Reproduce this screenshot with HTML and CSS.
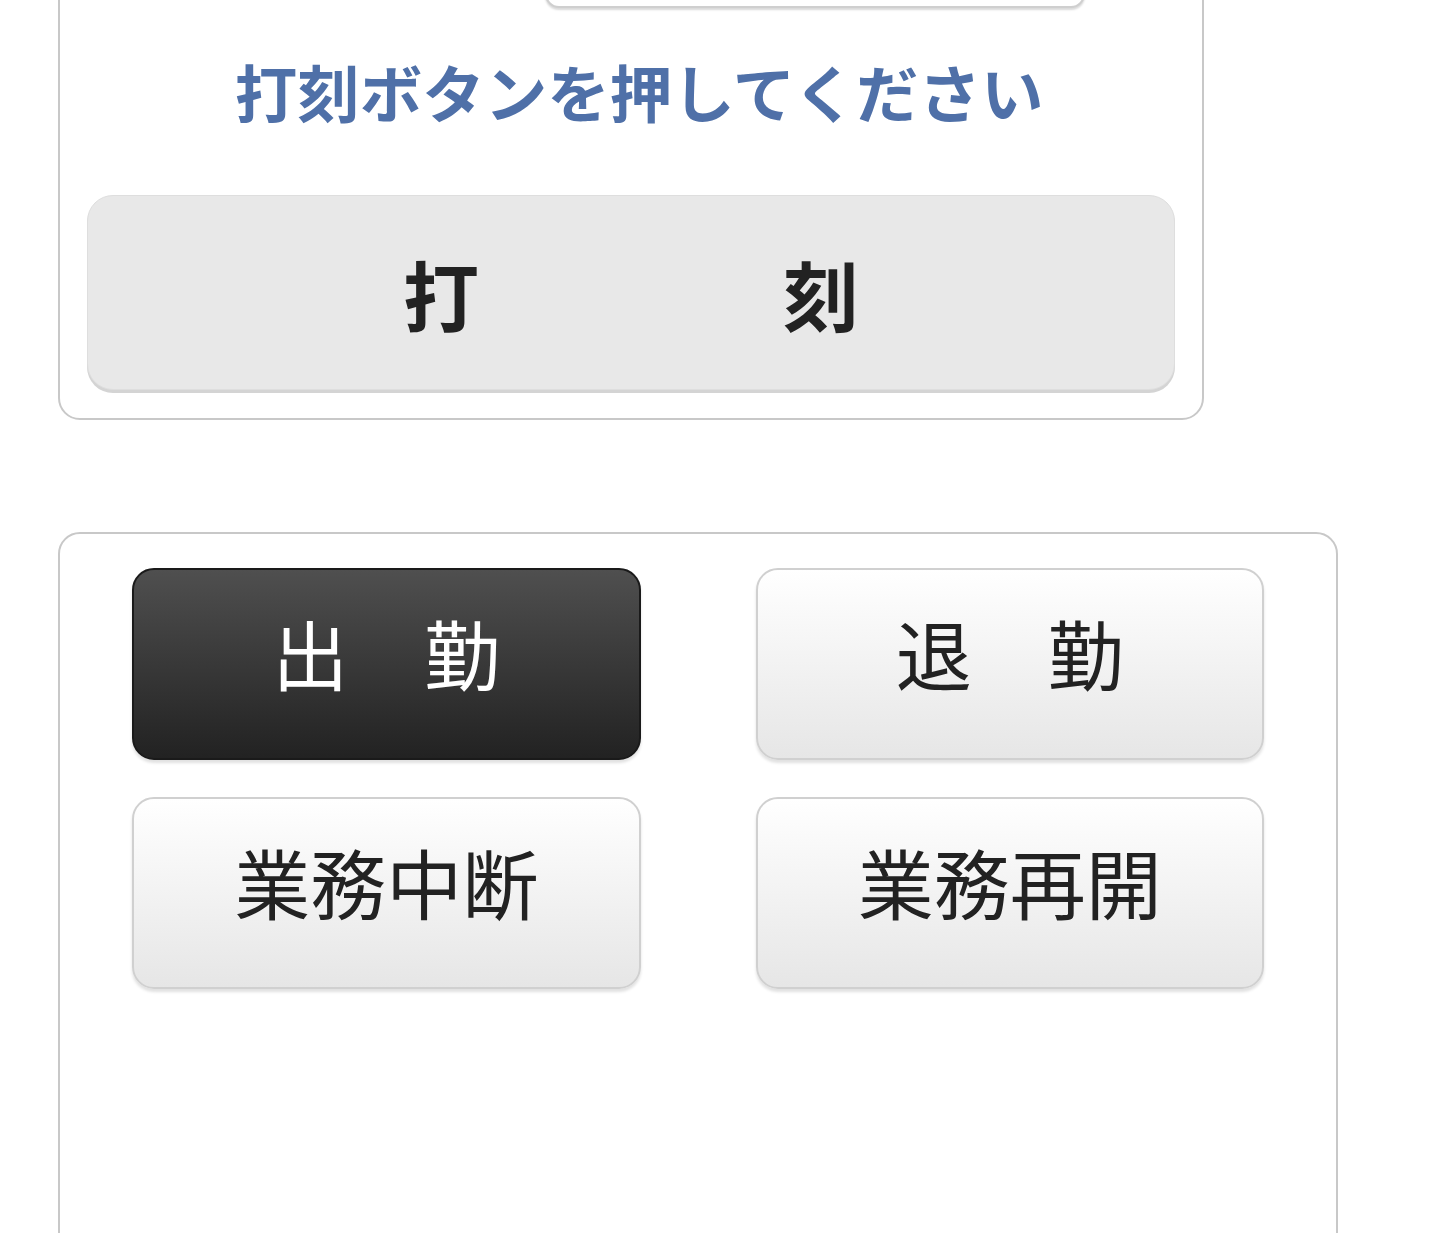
FILE: index.html
```html
<!DOCTYPE html>
<html lang="ja">
<head>
  <meta charset="UTF-8" />
  <meta name="viewport" content="width=device-width, initial-scale=1.0"/>
  <title>打刻</title>
  <link rel="stylesheet" href="styles.css">
</head>
<body>

<div class="page">

  <!-- 打刻カード -->
  <section class="card punch-card">
    <input type="text" class="time-box" readonly />
    <p class="message">打刻ボタンを押してください</p>
    <button class="punch-btn">打　　　　刻</button>
  </section>

  <!-- 勤務区分 -->
  <section class="card kind-card">
    <div class="kind-grid">
      <button class="kind-btn active">出　勤</button>
      <button class="kind-btn">退　勤</button>
      <button class="kind-btn">業務中断</button>
      <button class="kind-btn">業務再開</button>
    </div>
  </section>

</div>

</body>
</html>
```

FILE: styles.css
```css
body {
  margin: 0;
  padding: 0;
  background: #fff;
  font-family: "Noto Sans CJK JP", "Noto Sans", sans-serif;
  color: #222;
}

.page {
  margin-top: -74px;
  padding-left: 58px;
}

.card {
  box-sizing: border-box;
  background: #fff;
  border: 2px solid #c8c8c8;
  border-radius: 22px;
}

/* 打刻カード */
.punch-card {
  width: 1146px;
  padding: 20px 27px 28px;
}

.time-box {
  display: block;
  box-sizing: border-box;
  width: 540px;
  height: 60px;
  margin-left: 458px;
  border: 2px solid #cfcfcf;
  border-radius: 14px;
  box-shadow: 0 2px 2px rgba(0,0,0,0.15);
  background: #fff;
}

.message {
  margin: 46px 0 0;
  padding-left: 16px;
  text-align: center;
  font-size: 62.5px;
  line-height: 74px;
  font-weight: bold;
  color: #4f70a8;
}

.punch-btn {
  display: block;
  box-sizing: border-box;
  width: 100%;
  height: 195px;
  margin-top: 67px;
  background: #e8e8e8;
  border: 1px solid #dedede;
  border-radius: 26px;
  box-shadow: 0 3px 0 #d4d4d4;
  font-family: inherit;
  font-size: 76px;
  font-weight: bold;
  color: #222;
}

/* 勤務区分 */
.kind-card {
  width: 1280px;
  min-height: 800px;
  margin-top: 112px;
  padding: 34px 72px;
}

.kind-grid {
  display: grid;
  grid-template-columns: 1fr 1fr;
  gap: 37px 115px;
}

.kind-btn {
  box-sizing: border-box;
  height: 192px;
  padding: 0 0 24px;
  background: linear-gradient(#ffffff, #e6e6e6);
  border: 2px solid #d0d0d0;
  border-radius: 22px;
  box-shadow: 0 3px 3px rgba(0,0,0,0.12);
  font-family: inherit;
  font-size: 76px;
  color: #222;
}

.kind-btn.active {
  background: linear-gradient(#4f4f4f, #222);
  border-color: #1a1a1a;
  color: #fff;
}
```
